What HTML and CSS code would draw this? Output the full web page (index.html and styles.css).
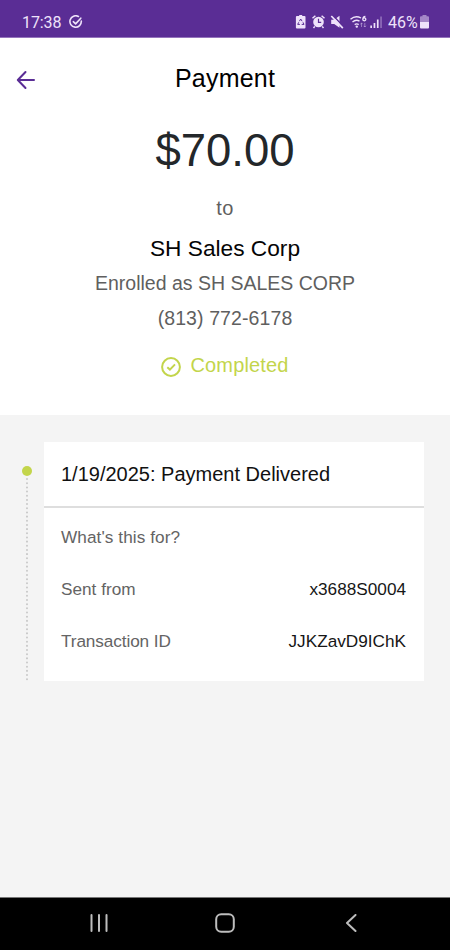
FILE: index.html
```html
<!DOCTYPE html>
<html lang="en">
<head>
<meta charset="utf-8">
<title>Payment</title>
<link rel="stylesheet" href="styles.css">
</head>
<body>
<div class="screen">
  <div class="status">
    <span class="clock">17:38</span>
    <svg class="status-check" width="14" height="14" viewBox="0 0 14 14" fill="none" stroke="currentColor" stroke-width="1.6" stroke-linecap="round" stroke-linejoin="round"><path d="M9.4 1.5A5.700 5.700 0 1 0 12.300 6"/><path d="M4.3 6.7l2.3 2.2 5.2-5.700"/></svg>
    <svg class="status-icons" width="88" height="16" viewBox="0 0 88 16" fill="currentColor">
      <path d="M4.200 2V1h3v1h2.300q1 0 1 1v10.500q0 1-1 1H1.900q-1 0-1-1V3q0-1 1-1z"/>
      <path d="M4.400 7.200l1.300-2.200 1.400 2.200M8 8.300l1 2.100H6.700M4.900 10.400H2.700l1-2.100" fill="none" stroke="#5a2d95" stroke-width="1"/>
      <circle cx="23.500" cy="8" r="5.300"/>
      <path d="M17.500 4.300l2.900-2.500M29.500 4.300l-2.900-2.500M19.800 12.400l-1.300 1.600M27.200 12.400l1.300 1.600" stroke="currentColor" stroke-width="1.500"/>
      <path d="M23.500 4.800v3.500h2.700" fill="none" stroke="#5a2d95" stroke-width="1.200"/>
      <path d="M36.200 5.700h3L44.500 1.700v12L39.200 10h-3z"/>
      <path d="M37.300 .8l11.500 12.300" stroke="#5a2d95" stroke-width="1.500"/>
      <path d="M36.300 2l11.500 12.200" stroke="currentColor" stroke-width="1.700"/>
      <g fill="none" stroke="currentColor" stroke-width="1.400"><path d="M55.500 5.200q5-4.300 10.500-1.200M57.500 8q3.500-3 7-.8M59.700 10.600q2-1.500 4 0"/><path d="M70.400 2.300q-2.600.2-2.600 3.100a1.500 1.500 0 1 0 .3-1" stroke-width="1.300"/></g>
      <circle cx="61.800" cy="12.600" r="1.200"/>
      <path d="M66.500 13V9M65.300 10.200L66.500 9l1.200 1.200M69.800 9v4M68.600 11.800l1.200 1.200 1.200-1.200" fill="none" stroke="currentColor" stroke-width=".8" opacity=".55"/>
      <path d="M75.300 11.500h1.700v2.500h-1.700zM78.600 9h1.700v5h-1.700zM81.900 5.500h1.700v8.500h-1.700z"/>
      <path d="M85.200 2.500h1.700V14h-1.700z" opacity=".35"/>
    </svg>
    <span class="percent">46%</span>
    <svg class="battery" width="9" height="14" viewBox="0 0 9 14" fill="currentColor"><path d="M2.500 1.300V0h4v1.300H8q1 0 1 1V7H0V2.300q0-1 1-1z" opacity=".5"/><path d="M0 7h9v5.500q0 1-1 1H1q-1 0-1-1z"/></svg>
  </div>

  <div class="summary">
    <div class="header">
      <svg class="back" width="20" height="20" viewBox="0 0 20 20" fill="none" stroke="currentColor" stroke-width="2" stroke-linecap="round" stroke-linejoin="round"><path d="M18 10H2M9.500 2L1.800 10l7.700 8"/></svg>
      <h1 class="title">Payment</h1>
    </div>
    <div class="amount">$70.00</div>
    <div class="to">to</div>
    <div class="payee">SH Sales Corp</div>
    <div class="enrolled">Enrolled as SH SALES CORP</div>
    <div class="phone">(813) 772-6178</div>
    <div class="state">
      <svg width="20" height="20" viewBox="0 0 20 20" fill="none" stroke="currentColor" stroke-width="2"><circle cx="10" cy="10" r="8.900"/><path d="M6.300 10.300l2.600 2.300 5.100-5.200"/></svg>
      <span>Completed</span>
    </div>
  </div>

  <div class="timeline">
    <div class="rail">
      <span class="dot"></span>
      <svg class="trail" width="2" height="204" viewBox="0 0 2 204"><path d="M1 1v202" stroke="#c6c6c6" stroke-width="1.900" stroke-linecap="round" stroke-dasharray="0.100 4.070"/></svg>
    </div>
    <div class="card">
      <div class="card-title"><span>1/19/2025: Payment Delivered</span></div>
      <div class="row"><span class="label what">What's this for?</span></div>
      <div class="row"><span class="label sent">Sent from</span><span class="value account">x3688S0004</span></div>
      <div class="row"><span class="label transaction">Transaction ID</span><span class="value id">JJKZavD9IChK</span></div>
    </div>
  </div>

  <div class="nav">
    <svg width="18" height="18" viewBox="0 0 18 18" fill="none" stroke="currentColor" stroke-width="2" stroke-linecap="round"><path d="M1.500 1v16M9 1v16M16.500 1v16"/></svg>
    <svg width="20" height="20" viewBox="0 0 20 20" fill="none" stroke="currentColor" stroke-width="2"><rect x="1.200" y="1.200" width="17.600" height="17.600" rx="5"/></svg>
    <svg width="18" height="18" viewBox="0 0 18 18" fill="none" stroke="currentColor" stroke-width="2" stroke-linecap="round" stroke-linejoin="round"><path d="M13.500 1L5 9l8.500 8"/></svg>
  </div>
</div>
</body>
</html>
```
FILE: styles.css
```css
* { box-sizing: border-box; }
body { margin: 0; background: #f4f4f4; font-family: "Liberation Sans", Arial, sans-serif; }
svg { display: block; flex: none; }

.screen { width: 450px; height: 950px; display: flex; flex-direction: column; overflow: hidden; }

.status {
  flex: none; display: flex; align-items: center; height: 38px; padding: 7px 21px 0 22px;
  background: #5a2d95; border-bottom: 1px solid #9474bc; color: #eee2fa;
  font-family: Roboto, sans-serif; font-size: 16px; white-space: nowrap;
}
.clock { width: 40px; letter-spacing: -0.1px; }
.status-check { margin-left: 7px; }
.status-icons { margin-left: auto; }
.percent { margin: 0 2px 0 5px; width: 30px; }

.summary {
  flex: none; display: flex; flex-direction: column; align-items: center;
  height: 377px; background: #fff; color: #5f5f5f; white-space: nowrap;
}
.header { display: grid; grid-template-columns: 16px 20px 1fr 36px; align-items: center; width: 100%; height: 80px; padding-top: 3px; }
.back { grid-column: 2; color: #5a2d95; }
.title { grid-column: 3; margin: 0; padding-bottom: 4px; text-align: center; color: #000; font-size: 25px; font-weight: 400; line-height: 28px; letter-spacing: 0.2px; }
.amount { margin-top: 7px; font-size: 45.5px; line-height: 52px; color: #23272a; }
.to { margin-top: 19px; font-size: 20px; line-height: 24px; letter-spacing: 0.3px; }
.payee { margin-top: 14px; font-size: 22.7px; line-height: 28px; color: #050505; }
.enrolled { margin-top: 9px; font-size: 19.5px; line-height: 24px; }
.phone { margin-top: 11px; font-size: 19.5px; line-height: 24px; letter-spacing: 0.1px; }
.state { display: flex; align-items: center; gap: 9px; margin-top: 23px; height: 24px; color: #c3d54b; font-size: 20px; letter-spacing: 0.15px; }
.state svg { margin-top: 3px; }

.timeline { flex: 1; display: flex; align-items: flex-start; padding: 27px 26px 0 22px; background: #f4f4f4; }
.rail { flex: none; display: flex; flex-direction: column; align-items: center; width: 10px; margin: 24px 12px 0 0; }
.dot { width: 10px; height: 10px; border-radius: 50%; background: #c3d54b; }
.trail { margin-top: 2px; }
.card { flex: 1; height: 239px; background: #fff; white-space: nowrap; }
.card-title { display: flex; align-items: center; height: 66px; padding: 0 17px; border-bottom: 2px solid #dedede; color: #111; font-size: 20px; }
.row { display: flex; align-items: center; justify-content: space-between; height: 52px; padding: 0 18px 0 17px; font-size: 17.2px; }
.card-title + .row { margin-top: 3px; }
.label { color: #646464; }
.what { letter-spacing: 0.08px; }
.transaction { letter-spacing: -0.1px; }
.value { color: #161616; }

.nav { flex: none; display: flex; align-items: center; justify-content: space-between; height: 53px; padding: 0 90px 2px; background: #000; border-top: 1px solid #777; color: #bdbdbd; }
```
